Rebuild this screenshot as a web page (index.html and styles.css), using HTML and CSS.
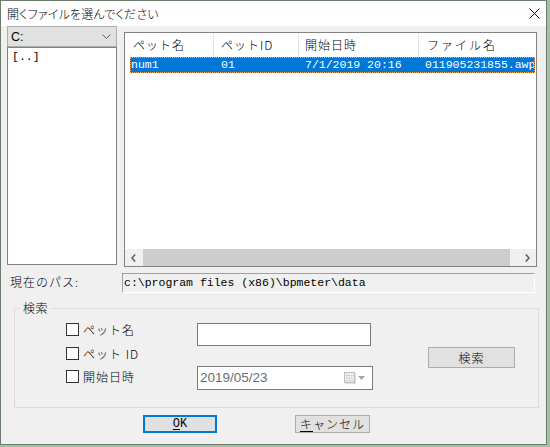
FILE: index.html
```html
<!DOCTYPE html>
<html lang="ja">
<head>
<meta charset="utf-8">
<title>開くファイルを選んでください</title>
<link rel="stylesheet" href="styles.css">
</head>
<body>
<div class="window">
  <div class="titlebar">
    <span class="title">開くファイルを選んでください</span>
    <svg class="close" width="11" height="11" viewBox="0 0 11 11"><path d="M0.5 0.5 L10.5 10.5 M10.5 0.5 L0.5 10.5" stroke="#111" stroke-width="1" fill="none"/></svg>
  </div>
  <div class="client">
    <div class="top">
      <div class="leftcol">
        <div class="combo">
          <span class="combo-text">C:</span>
          <svg width="9" height="6" viewBox="0 0 9 6"><polyline points="0.5,0.5 4.5,4.5 8.5,0.5" fill="none" stroke="#606060" stroke-width="1"/></svg>
        </div>
        <div class="listbox"><div class="entry">[..]</div></div>
      </div>
      <div class="listview">
        <div class="header">
          <div class="hcell h1">ペット名</div>
          <div class="hcell h2">ペットID</div>
          <div class="hcell h3">開始日時</div>
          <div class="hcell h4">ファイル名</div>
        </div>
        <div class="rows">
          <div class="row selected">
            <span class="cell c1">num1</span>
            <span class="cell c2">01</span>
            <span class="cell c3">7/1/2019 20:16</span>
            <span class="cell c4">011905231855.awp</span>
          </div>
        </div>
        <div class="hscroll">
          <div class="sarrow"><svg width="5" height="8" viewBox="0 0 5 8"><polyline points="4.2,0.5 1,4 4.2,7.5" fill="none" stroke="#606060" stroke-width="1.6"/></svg></div>
          <div class="track"><div class="thumb"></div></div>
          <div class="sarrow"><svg width="5" height="8" viewBox="0 0 5 8"><polyline points="0.8,0.5 4,4 0.8,7.5" fill="none" stroke="#606060" stroke-width="1.6"/></svg></div>
        </div>
      </div>
    </div>
    <div class="pathrow">
      <span class="pathlabel">現在のパス:</span>
      <div class="pathbox">c:\program files (x86)\bpmeter\data</div>
    </div>
    <fieldset class="group">
      <legend>検索</legend>
      <div class="grid">
        <label class="chk r1"><span class="box"></span><span class="lbl">ペット名</span></label>
        <div class="tinput"></div>
        <label class="chk r2"><span class="box"></span><span class="lbl">ペット ID</span></label>
        <div class="btn search">検索</div>
        <label class="chk r3"><span class="box"></span><span class="lbl">開始日時</span></label>
        <div class="date">
          <span class="datetext">2019/05/23</span>
          <span class="dateicons">
            <svg width="12" height="12" viewBox="0 0 12 12">
              <rect x="0.5" y="0.5" width="10" height="10" fill="#fafafa" stroke="#b8b8b8"/>
              <path d="M0.5 3.5 H10.5 M0.5 6 H10.5 M0.5 8.5 H10.5 M3 0.5 V10.5 M5.5 0.5 V10.5 M8 0.5 V10.5" stroke="#d6d6d6" stroke-width="1" fill="none"/>
              <path d="M11.5 1.5 V11.5 H1.5" stroke="#e0e0e0" fill="none"/>
            </svg>
            <svg width="7" height="4" viewBox="0 0 7 4"><polygon points="0,0 7,0 3.5,4" fill="#a6a6a6"/></svg>
          </span>
        </div>
      </div>
    </fieldset>
    <div class="btns">
      <div class="btn ok"><u>O</u>K</div>
      <div class="btn cancel"><u>キ</u>ャンセル</div>
    </div>
  </div>
</div>
</body>
</html>
```

FILE: styles.css
```css
html, body {
  margin: 0;
  padding: 0;
}
body {
  background: #a2c1a2;
  width: 550px;
  height: 447px;
  overflow: hidden;
}
.window {
  width: 547px;
  height: 445px;
  box-sizing: border-box;
  border: 1px solid #6c7c6c;
  background: #f0f0f0;
  font-family: "Noto Sans CJK JP", sans-serif;
  font-weight: 300;
  font-size: 12px;
  color: #000;
  display: flex;
  flex-direction: column;
}
.titlebar {
  height: 25px;
  flex-shrink: 0;
  background: #fff;
  display: flex;
  align-items: center;
  justify-content: space-between;
  padding: 0 6px 0 6px;
}
.title {
  font-feature-settings: "palt";
  line-height: 14px;
  letter-spacing: 0.2px;
}
.close {
  display: block;
}
.client {
  display: flex;
  flex-direction: column;
}
.top {
  display: flex;
  align-items: flex-start;
  padding-left: 6px;
}
.leftcol {
  width: 110px;
  display: flex;
  flex-direction: column;
}
.combo {
  height: 21px;
  box-sizing: border-box;
  border: 1px solid #adadad;
  background: #e1e1e1;
  display: flex;
  align-items: center;
  justify-content: space-between;
  padding: 0 5px 0 3px;
}
.combo-text {
  font-family: "Liberation Sans", sans-serif;
  font-weight: 400;
  font-size: 12.5px;
  line-height: 14px;
}
.combo svg {
  display: block;
}
.listbox {
  height: 218px;
  box-sizing: border-box;
  border: 1px solid #828282;
  background: #fff;
  padding: 2px 4px;
}
.entry {
  font-family: "Liberation Mono", monospace;
  font-weight: 400;
  font-size: 11.5px;
  line-height: 13px;
}
.listview {
  margin-left: 7px;
  margin-top: 6px;
  width: 413px;
  height: 235px;
  box-sizing: border-box;
  border: 1px solid #828282;
  background: #fff;
  display: flex;
  flex-direction: column;
}
.header {
  height: 24px;
  flex-shrink: 0;
  display: flex;
}
.hcell {
  box-sizing: border-box;
  border-right: 1px solid #e5e5e5;
  display: flex;
  align-items: center;
  letter-spacing: 1px;
  line-height: 14px;
  white-space: nowrap;
}
.h1 { width: 89px; padding-left: 8px; }
.h2 { width: 85px; padding-left: 7px; }
.h3 { width: 120px; padding-left: 6px; }
.h4 { flex: 1; border-right: none; padding-left: 8px; letter-spacing: 2px; }
.rows {
  flex: 1;
}
.row {
  margin-left: 5px;
  width: 405px;
  height: 16px;
  box-sizing: border-box;
  display: flex;
  align-items: center;
  font-family: "Liberation Mono", monospace;
  font-weight: 400;
  font-size: 11.5px;
  line-height: 14px;
  white-space: nowrap;
  overflow: hidden;
}
.selected {
  background: #0078d7;
  border: 1px dotted #f0a35a;
  color: #fff;
}
.cell { display: block; overflow: hidden; }
.c1 { width: 90px; }
.c2 { width: 84px; }
.c3 { width: 120px; }
.c4 { flex: 1; }
.hscroll {
  height: 17px;
  flex-shrink: 0;
  display: flex;
  background: #f0f0f0;
}
.sarrow {
  width: 17px;
  display: flex;
  align-items: center;
  justify-content: center;
}
.sarrow svg { display: block; }
.track {
  flex: 1;
  display: flex;
}
.thumb {
  margin-left: 1px;
  width: 367px;
  background: #cdcdcd;
}
.pathrow {
  margin-top: 6px;
  display: flex;
  align-items: center;
  padding-left: 9px;
}
.pathlabel {
  width: 112px;
  letter-spacing: 1px;
  line-height: 14px;
  margin-top: -3px;
}
.pathbox {
  width: 413px;
  height: 20px;
  box-sizing: border-box;
  border: 1px solid;
  border-color: #a0a0a0 #fff #fff #a0a0a0;
  padding-left: 1px;
  font-family: "Liberation Mono", monospace;
  font-weight: 400;
  font-size: 11.5px;
  line-height: 18px;
  white-space: nowrap;
}
.group {
  margin: 8px 0 0 13px;
  padding: 0;
  width: 525px;
  box-sizing: border-box;
  border: 1px solid #dcdcdc;
  min-width: 0;
}
.group legend {
  padding: 0 3px;
  margin-left: 5px;
  line-height: 14px;
  font-size: 12px;
  letter-spacing: 0.5px;
}
.grid {
  display: grid;
  grid-template-columns: 131px 175px 56px 87px;
  grid-template-rows: 23px 20px 24px;
  padding: 8px 0 17px 51px;
}
.chk {
  display: flex;
  align-items: center;
  align-self: start;
  grid-column: 1;
}
.chk.r1 { grid-row: 1; }
.chk.r2 { grid-row: 2; margin-top: 1px; }
.chk.r3 { grid-row: 3; margin-top: 4px; }
.box {
  width: 13px;
  height: 13px;
  box-sizing: border-box;
  border: 1px solid #333;
  background: #fff;
  flex-shrink: 0;
}
.lbl {
  margin-left: 4px;
  letter-spacing: 1px;
  line-height: 13px;
  white-space: pre;
}
.tinput {
  grid-column: 2;
  grid-row: 1;
  align-self: start;
  width: 174px;
  height: 23px;
  box-sizing: border-box;
  border: 1px solid #7a7a7a;
  background: #fff;
}
.date {
  grid-column: 2;
  grid-row: 3;
  align-self: start;
  width: 176px;
  height: 24px;
  box-sizing: border-box;
  border: 1px solid #7a7a7a;
  background: #fff;
  display: flex;
  align-items: center;
  padding: 0 7px 0 2px;
}
.datetext {
  font-family: "Liberation Sans", sans-serif;
  font-weight: 400;
  font-size: 13.5px;
  color: #6d6d6d;
  line-height: 16px;
}
.dateicons {
  margin-left: auto;
  display: flex;
  align-items: center;
  gap: 2px;
}
.dateicons svg { display: block; }
.btn {
  box-sizing: border-box;
  background: #e1e1e1;
  border: 1px solid #adadad;
  display: flex;
  align-items: center;
  justify-content: center;
  letter-spacing: 1px;
  line-height: 14px;
}
.search {
  grid-column: 4;
  grid-row: 2 / 4;
  align-self: start;
  margin-top: 1px;
  width: 87px;
  height: 21px;
}
.btns {
  margin-top: 7px;
  display: flex;
  padding-left: 142px;
  gap: 78px;
}
.ok {
  width: 74px;
  height: 18px;
  border: 2px solid #0078d7;
  font-family: "Liberation Mono", monospace;
  font-weight: 400;
  font-size: 12px;
  letter-spacing: 0;
}
.cancel {
  width: 75px;
  height: 18px;
}
u {
  text-underline-offset: 2px;
}
```
